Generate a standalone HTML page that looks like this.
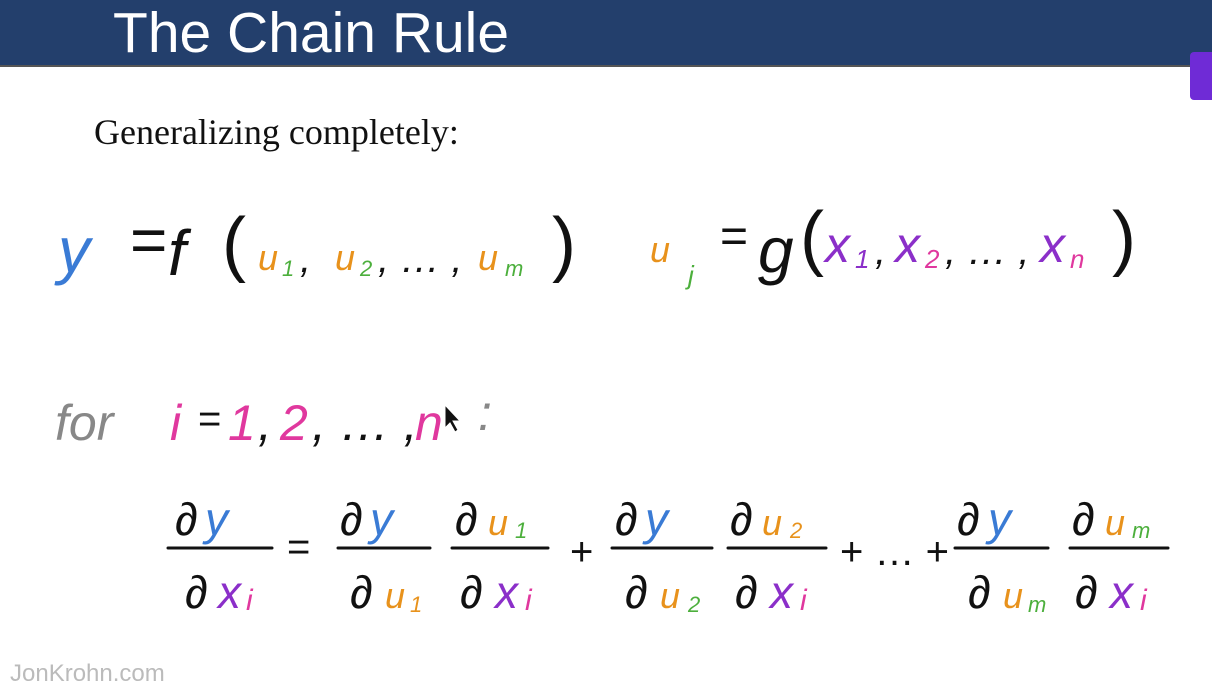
<!DOCTYPE html>
<html><head><meta charset="utf-8"><style>
body{margin:0;width:1212px;height:668px;overflow:hidden;background:#fff;position:relative;font-family:"Liberation Sans",sans-serif}
.hdr{position:absolute;left:0;top:0;width:1212px;height:65px;background:#233f6c;border-bottom:2px solid #555}
.t{position:absolute;left:113px;top:0px;color:#fff;font-size:57px;font-family:"Liberation Sans",sans-serif}
.tab{position:absolute;left:1190px;top:52px;width:30px;height:48px;background:#6f2bd6;border-radius:4px}
.sub{position:absolute;left:94px;top:111px;font-family:"Liberation Serif",serif;font-size:36px;color:#111}
.wm{position:absolute;left:10px;top:660px;font-size:24px;color:#bbb}
</style></head><body>
<div class="hdr"><div class="t">The Chain Rule</div></div>
<div class="tab"></div>
<div class="sub">Generalizing completely:</div>
<svg width="1212" height="668" style="position:absolute;left:0;top:0" font-family="Liberation Sans, sans-serif" font-style="italic">
<g font-size="64">
<text x="58" y="272" fill="#3a7bd5">y</text>
<text x="130" y="262" fill="#111" font-style="normal">=</text>
<text x="168" y="275" fill="#111">f</text>
<text x="222" y="268" fill="#111" font-style="normal" font-size="72">(</text>
<text x="258" y="270" fill="#e8921c" font-size="36">u</text><text x="282" y="276" fill="#4caf3c" font-size="22">1</text>
<text x="300" y="272" fill="#111" font-size="40">,</text>
<text x="335" y="270" fill="#e8921c" font-size="36">u</text><text x="360" y="276" fill="#4caf3c" font-size="22">2</text>
<text x="378" y="272" fill="#111" font-size="40">, … ,</text>
<text x="478" y="270" fill="#e8921c" font-size="36">u</text><text x="505" y="276" fill="#4caf3c" font-size="22">m</text>
<text x="552" y="268" fill="#111" font-style="normal" font-size="72">)</text>
<text x="650" y="262" fill="#e8921c" font-size="36">u</text><text x="688" y="284" fill="#4caf3c" font-size="26">j</text>
<text x="720" y="252" fill="#111" font-style="normal" font-size="48">=</text>
<text x="758" y="272" fill="#111">g</text>
<text x="800" y="262" fill="#111" font-style="normal" font-size="72">(</text>
<text x="825" y="262" fill="#8b2fc9" font-size="50">x</text><text x="855" y="268" fill="#8b2fc9" font-size="26">1</text>
<text x="875" y="264" fill="#111" font-size="40">,</text>
<text x="895" y="262" fill="#8b2fc9" font-size="50">x</text><text x="925" y="268" fill="#e0389e" font-size="26">2</text>
<text x="945" y="264" fill="#111" font-size="40">, … ,</text>
<text x="1040" y="262" fill="#8b2fc9" font-size="50">x</text><text x="1070" y="268" fill="#e0389e" font-size="26">n</text>
<text x="1112" y="262" fill="#111" font-style="normal" font-size="72">)</text>
</g>
<g font-size="50">
<text x="55" y="440" fill="#888">for</text>
<text x="170" y="440" fill="#e0389e">i</text>
<text x="198" y="432" fill="#111" font-style="normal" font-size="40">=</text>
<text x="228" y="440" fill="#e0389e">1</text>
<text x="258" y="440" fill="#111">,</text>
<text x="280" y="440" fill="#e0389e">2</text>
<text x="312" y="440" fill="#111">, … ,</text>
<text x="415" y="440" fill="#e0389e">n</text>
<text x="478" y="430" fill="#888">:</text>
</g>
<g font-size="46" stroke-linecap="round">
<g stroke="#111" stroke-width="3">
<line x1="168" y1="548" x2="272" y2="548"/><line x1="338" y1="548" x2="430" y2="548"/>
<line x1="452" y1="548" x2="548" y2="548"/><line x1="612" y1="548" x2="712" y2="548"/>
<line x1="728" y1="548" x2="826" y2="548"/><line x1="955" y1="548" x2="1048" y2="548"/>
<line x1="1070" y1="548" x2="1168" y2="548"/></g>
<text x="175" y="535" fill="#111" font-style="normal">∂</text><text x="205" y="535" fill="#3a7bd5">y</text>
<text x="185" y="608" fill="#111" font-style="normal">∂</text><text x="218" y="608" fill="#8b2fc9">x</text><text x="246" y="610" fill="#e0389e" font-size="30">i</text>
<text x="287" y="560" fill="#111" font-style="normal" font-size="40">=</text>
<text x="340" y="535" fill="#111" font-style="normal">∂</text><text x="370" y="535" fill="#3a7bd5">y</text>
<text x="350" y="608" fill="#111" font-style="normal">∂</text><text x="385" y="608" fill="#e8921c" font-size="36">u</text><text x="410" y="612" fill="#e8921c" font-size="22">1</text>
<text x="455" y="535" fill="#111" font-style="normal">∂</text><text x="488" y="535" fill="#e8921c" font-size="36">u</text><text x="515" y="538" fill="#4caf3c" font-size="22">1</text>
<text x="460" y="608" fill="#111" font-style="normal">∂</text><text x="495" y="608" fill="#8b2fc9">x</text><text x="525" y="610" fill="#e0389e" font-size="30">i</text>
<text x="570" y="565" fill="#111" font-style="normal" font-size="40">+</text>
<text x="615" y="535" fill="#111" font-style="normal">∂</text><text x="645" y="535" fill="#3a7bd5">y</text>
<text x="625" y="608" fill="#111" font-style="normal">∂</text><text x="660" y="608" fill="#e8921c" font-size="36">u</text><text x="688" y="612" fill="#4caf3c" font-size="22">2</text>
<text x="730" y="535" fill="#111" font-style="normal">∂</text><text x="762" y="535" fill="#e8921c" font-size="36">u</text><text x="790" y="538" fill="#e8921c" font-size="22">2</text>
<text x="735" y="608" fill="#111" font-style="normal">∂</text><text x="770" y="608" fill="#8b2fc9">x</text><text x="800" y="610" fill="#e0389e" font-size="30">i</text>
<text x="840" y="565" fill="#111" font-style="normal" font-size="40">+ … +</text>
<text x="957" y="535" fill="#111" font-style="normal">∂</text><text x="988" y="535" fill="#3a7bd5">y</text>
<text x="968" y="608" fill="#111" font-style="normal">∂</text><text x="1003" y="608" fill="#e8921c" font-size="36">u</text><text x="1028" y="612" fill="#4caf3c" font-size="22">m</text>
<text x="1072" y="535" fill="#111" font-style="normal">∂</text><text x="1105" y="535" fill="#e8921c" font-size="36">u</text><text x="1132" y="538" fill="#4caf3c" font-size="22">m</text>
<text x="1075" y="608" fill="#111" font-style="normal">∂</text><text x="1110" y="608" fill="#8b2fc9">x</text><text x="1140" y="610" fill="#e0389e" font-size="30">i</text>
</g>
<path d="M445 405 L445 428 L450 423 L455 432 L458 430 L453 421 L460 421 Z" fill="#111" stroke="#fff" stroke-width="1"/>
</svg>
<div class="wm">JonKrohn.com</div>
</body></html>
